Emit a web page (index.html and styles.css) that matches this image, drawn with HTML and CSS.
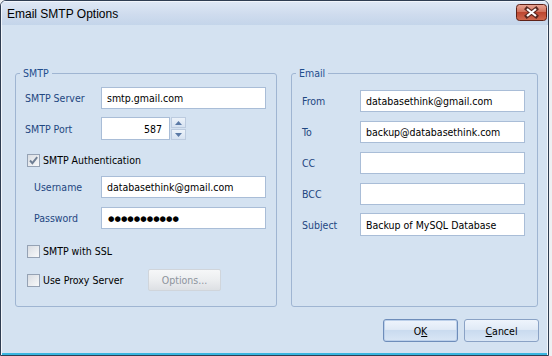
FILE: index.html
```html
<!DOCTYPE html>
<html>
<head>
<meta charset="utf-8">
<title>Email SMTP Options</title>
<link rel="stylesheet" href="styles.css">
</head>
<body>
<div class="window">
  <div class="titlebar">
    <span class="title">Email SMTP Options</span>
    <span class="close">
      <svg width="31" height="17" viewBox="0 0 31 17">
        <defs>
          <linearGradient id="cg" x1="0" y1="0" x2="0" y2="1">
            <stop offset="0" stop-color="#e9a797"/>
            <stop offset="0.45" stop-color="#d2735e"/>
            <stop offset="0.5" stop-color="#bd4731"/>
            <stop offset="1" stop-color="#d06a50"/>
          </linearGradient>
        </defs>
        <rect x="0.5" y="0.5" width="30" height="16" rx="3" fill="url(#cg)" stroke="#5e2118"/>
        <path d="M11 5 L20 12 M20 5 L11 12" stroke="#5a2820" stroke-width="4.2" stroke-linecap="square"/>
        <path d="M11 5 L20 12 M20 5 L11 12" stroke="#ffffff" stroke-width="2.2"/>
      </svg>
    </span>
  </div>
  <div class="content">
    <div class="groups">
      <fieldset class="group group-smtp">
        <legend>SMTP</legend>
        <div class="row r-server"><span class="lbl">SMTP Server</span><span class="input">smtp.gmail.com</span></div>
        <div class="row r-port">
          <span class="lbl">SMTP Port</span><span class="input port">587</span>
          <span class="spin">
            <span class="spin-btn"><svg width="7" height="4" viewBox="0 0 7 4"><path d="M0 4 L3.5 0 L7 4 Z" fill="#5b7aa6"/></svg></span>
            <span class="spin-btn"><svg width="7" height="4" viewBox="0 0 7 4"><path d="M0 0 L3.5 4 L7 0 Z" fill="#5b7aa6"/></svg></span>
          </span>
        </div>
        <div class="row r-check r-auth">
          <span class="cb"><svg width="11" height="11" viewBox="0 0 11 11"><path d="M2 5.5 L4.4 8.2 L9.2 2.2" fill="none" stroke="#6f7f94" stroke-width="1.9"/></svg></span>
          <span class="cb-label">SMTP Authentication</span>
        </div>
        <div class="row r-user"><span class="lbl indent">Username</span><span class="input">databasethink@gmail.com</span></div>
        <div class="row r-pass"><span class="lbl indent">Password</span><span class="input pass">●●●●●●●●●●●</span></div>
        <div class="row r-check r-ssl">
          <span class="cb"></span><span class="cb-label">SMTP with SSL</span>
        </div>
        <div class="row r-check r-proxy">
          <span class="cb"></span><span class="cb-label proxy-label">Use Proxy Server</span>
          <span class="btn-disabled">Options...</span>
        </div>
      </fieldset>
      <fieldset class="group group-email">
        <legend>Email</legend>
        <div class="row e-row e-first"><span class="lbl e-lbl">From</span><span class="input">databasethink@gmail.com</span></div>
        <div class="row e-row"><span class="lbl e-lbl">To</span><span class="input">backup@databasethink.com</span></div>
        <div class="row e-row"><span class="lbl e-lbl">CC</span><span class="input"></span></div>
        <div class="row e-row"><span class="lbl e-lbl">BCC</span><span class="input"></span></div>
        <div class="row e-row e-last"><span class="lbl e-lbl">Subject</span><span class="input">Backup of MySQL Database</span></div>
      </fieldset>
    </div>
    <div class="buttons">
      <span class="btn btn-ok">O<u>K</u></span>
      <span class="btn"><u>C</u>ancel</span>
    </div>
  </div>
</div>
</body>
</html>
```
FILE: styles.css
```css
* { box-sizing: border-box; }
html, body { margin: 0; padding: 0; }
body {
  width: 552px;
  height: 356px;
  overflow: hidden;
  background: #eef0f3;
  font-family: "DejaVu Sans Condensed", "Liberation Sans", sans-serif;
  font-size: 10.5px;
  color: #000;
}
.window {
  width: 549px;
  height: 356px;
  border: 1px solid #2f3d52;
  border-radius: 6px 6px 0 0;
  display: flex;
  flex-direction: column;
  background: #d4e2f1;
  overflow: hidden;
}
.titlebar {
  height: 24px;
  flex: none;
  display: flex;
  align-items: flex-start;
  justify-content: space-between;
  padding: 0 1px 0 6px;
  background: linear-gradient(#dfe8f5, #cfdcee 55%, #c4d5ea);
  box-shadow: inset 1px 1px 0 #f1f5fb;
}
.title {
  font-family: "Liberation Sans", sans-serif;
  font-size: 12px;
  line-height: 14px;
  margin-top: 6px;
  color: #000;
}
.close { display: block; width: 31px; height: 17px; margin-top: 3px; }
.close svg { display: block; }
.content {
  flex: 1;
  display: flex;
  flex-direction: column;
  padding: 41px 10px 0 14px;
  box-shadow: inset 1px 0 0 #f3f7fc, inset -1px 0 0 #f3f7fc, inset 0 -2px 0 #38b6e0;
}
.groups {
  display: flex;
  gap: 14px;
  height: 241px;
}
.group {
  margin: 0;
  padding: 7px 0 0 9px;
  border: 1px solid #9fb5d2;
  border-radius: 3px;
  min-width: 0;
}
.group legend {
  padding: 0 3px;
  margin-left: -5px;
  line-height: 14px;
  color: #1f4e8e;
}
.group-smtp { width: 262px; }
.group-email { width: 247px; padding: 10px 0 0 10px; }
.group-email legend { margin-left: -6px; }
.row { display: flex; align-items: center; }
.lbl { width: 76px; color: #1f4781; flex: none; }
.lbl.indent { margin-left: 9px; width: 67px; }
.input {
  height: 22px;
  width: 165px;
  flex: none;
  border: 1px solid #a9bdd7;
  background: #fff;
  padding: 0 5px;
  display: flex;
  align-items: center;
  white-space: nowrap;
  overflow: hidden;
}
.input.port { width: 69px; height: 23px; justify-content: flex-end; padding-right: 7px; }
.input.pass { font-family: "DejaVu Sans", sans-serif; font-size: 7.4px; padding-left: 6px; }
.spin {
  display: flex;
  flex-direction: column;
  margin-left: 1px;
  width: 15px;
  height: 23px;
  gap: 1px;
}
.spin-btn {
  flex: 1;
  display: flex;
  align-items: center;
  justify-content: center;
  border: 1px solid #bccbdf;
  background: linear-gradient(#edf3fa, #d6e2f1);
}
.spin-btn svg { display: block; }
.r-server { height: 22px; }
.r-port { height: 23px; margin-top: 8px; }
.r-check { padding-left: 2px; height: 14px; }
.r-auth { margin-top: 13px; }
.r-user, .r-pass { height: 22px; margin-top: 9px; }
.r-ssl { margin-top: 15px; }
.r-proxy { margin-top: 11px; height: 22px; }
.cb {
  width: 13px;
  height: 13px;
  flex: none;
  border: 1px solid #95a2b4;
  background: linear-gradient(135deg, #d9dde3, #f8f9fa);
  margin-right: 3px;
  display: flex;
  align-items: center;
  justify-content: center;
}
.cb svg { display: block; }
.cb-label { color: #000; }
.proxy-label { width: 105px; }
.btn-disabled {
  width: 73px;
  height: 22px;
  flex: none;
  display: flex;
  align-items: center;
  justify-content: center;
  border: 1px solid #d0d5db;
  border-radius: 2px;
  background: linear-gradient(#f6f7f8, #eceef0 50%, #dde0e4);
  color: #8d949d;
}
.e-lbl { width: 58px; }
.e-row { height: 22px; margin-top: 9px; }
.e-first { margin-top: 0; }
.e-last { margin-top: 8px; height: 23px; }
.e-last .input { height: 23px; }
.buttons {
  display: flex;
  justify-content: flex-end;
  gap: 6px;
  margin-top: 12px;
  margin-right: -1px;
}
.btn {
  width: 75px;
  height: 23px;
  display: flex;
  align-items: center;
  justify-content: center;
  border: 1px solid #8aa2c5;
  border-radius: 3px;
  background: linear-gradient(#eef4fc 0%, #e0eaf6 45%, #cadbef 50%, #d9e6f5 100%);
  color: #000;
}
.btn-ok { border-color: #6e8dba; box-shadow: inset 0 0 0 1px #bcd0ea; }
.btn u { text-decoration: underline; text-underline-offset: 1px; }
```
